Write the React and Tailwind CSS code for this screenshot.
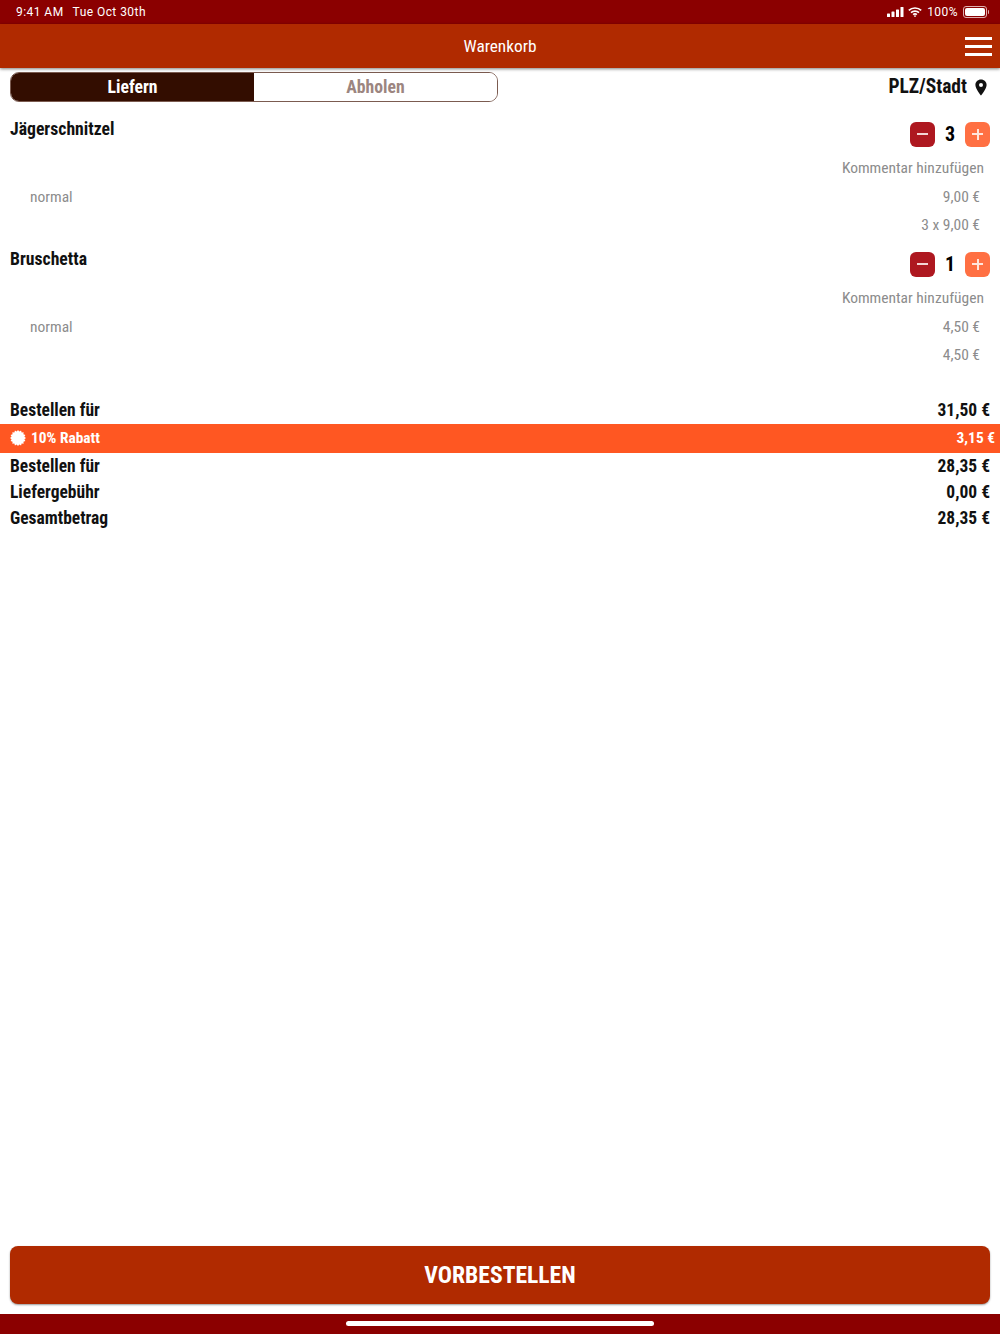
import { MapPin } from 'lucide-react';

// 10% badge, little saw-edged disc
const burstPoints = Array.from({ length: 32 }, (_, i) => {
  const r = i % 2 === 0 ? 12 : 9.8;
  const a = (i * Math.PI) / 16;
  return `${(12 + r * Math.sin(a)).toFixed(2)},${(12 - r * Math.cos(a)).toFixed(2)}`;
}).join(' ');

function Stepper({ count }) {
  return (
    <div className="flex items-center">
      <button className="w-[25px] h-[25px] rounded-[6px] bg-[#ae1820] flex items-center justify-center">
        <span className="block w-[11px] h-[2px] bg-[#f3d5d5]" />
      </button>
      <span className="w-[30px] text-center text-[20px] font-bold text-black [font-stretch:75%]">{count}</span>
      <button className="relative w-[25px] h-[25px] rounded-[6px] bg-[#ff7043] flex items-center justify-center">
        <span className="block w-[11px] h-[2px] bg-[#ffe5dc]" />
        <span className="absolute block w-[2px] h-[11px] bg-[#ffe5dc]" />
      </button>
    </div>
  );
}

function CartItem({ name, count, price, total }) {
  return (
    <div className="px-[10px]">
      <div className="flex items-start justify-between h-[38px]">
        <span className="pt-[1px] text-[17.7px] leading-[24px] font-bold text-[#111] [font-stretch:75%]">{name}</span>
        <div className="pt-[3px]"><Stepper count={count} /></div>
      </div>
      <div className="flex justify-end h-[29px] items-center pr-[6px] text-[15.5px] text-[#8c8c8c] [font-stretch:75%]">Kommentar hinzufügen</div>
      <div className="flex justify-between h-[29px] items-center pl-[20px] pr-[10px] text-[15.5px] text-[#8c8c8c] [font-stretch:75%]">
        <span>normal</span>
        <span>{price}</span>
      </div>
      <div className="flex justify-end h-[28px] items-center pr-[10px] text-[15.5px] text-[#8c8c8c] [font-stretch:75%]">{total}</div>
    </div>
  );
}

function TotalRow({ label, value, h }) {
  return (
    <div className={`flex justify-between items-center px-[10px] text-[17.5px] font-bold text-[#111] [font-stretch:75%] ${h}`}>
      <span>{label}</span>
      <span>{value}</span>
    </div>
  );
}

export default function App() {
  return (
    <div className="w-[1000px] h-[1334px] flex flex-col bg-white overflow-hidden [font-family:Roboto,sans-serif]">
      {/* status bar */}
      <div className="h-[24px] bg-[#8b0000] flex items-center justify-between pl-[16px] pr-[13px] text-white text-[12px] tracking-[0.45px]">
        <div className="flex gap-[9px]"><span>9:41 AM</span><span>Tue Oct 30th</span></div>
        <div className="flex items-center gap-[4px]">
          <svg width="17" height="10" viewBox="0 0 17 10" fill="white">
            <rect x="0" y="6.5" width="3" height="3.5" rx="0.6" />
            <rect x="4.5" y="4.5" width="3" height="5.5" rx="0.6" />
            <rect x="9" y="2.5" width="3" height="7.5" rx="0.6" />
            <rect x="13.5" y="0" width="3" height="10" rx="0.6" />
          </svg>
          <svg width="14" height="10" viewBox="0 0 14 10" fill="none" stroke="white" strokeWidth="1.7">
            <path d="M0.8 3.4C4.2 0.2 9.8 0.2 13.2 3.4" />
            <path d="M3 5.6C5.2 3.6 8.8 3.6 11 5.6" />
            <path d="M5.1 7.7C6.2 6.8 7.8 6.8 8.9 7.7" />
            <circle cx="7" cy="9.1" r="0.5" fill="white" strokeWidth="0.8" />
          </svg>
          <span className="ml-[1px]">100%</span>
          <div className="relative ml-[1px] w-[24px] h-[12px] rounded-[3px] border border-[#e0b0b0] p-[1px]">
            <div className="w-full h-full rounded-[2px] bg-white" />
            <div className="absolute right-[-3px] top-[3px] w-[1.5px] h-[4px] rounded-r bg-[#e0b0b0]" />
          </div>
        </div>
      </div>

      {/* header */}
      <div className="relative h-[44px] bg-[#b02a00] flex items-center justify-center shadow-[0_1px_3px_rgba(0,0,0,0.5)] z-10">
        <span className="pt-[1px] text-white text-[17.3px] [font-stretch:75%]">Warenkorb</span>
        <div className="absolute right-[8px] top-[13px] w-[27px] flex flex-col gap-[5px]">
          <span className="block h-[3px] bg-white" />
          <span className="block h-[3px] bg-white" />
          <span className="block h-[3px] bg-white" />
        </div>
      </div>

      {/* delivery tabs */}
      <div className="flex items-center justify-between pl-[10px] pr-[13px] mt-[4px] h-[30px]">
        <div className="flex w-[488px] h-[30px] rounded-[9px] border-[1.5px] border-[#7b5b50] overflow-hidden">
          <div className="w-[243px] bg-[#330d00] text-white flex items-center justify-center text-[17.7px] font-bold [font-stretch:75%]">Liefern</div>
          <div className="flex-1 bg-white text-[#9c8580] flex items-center justify-center text-[17.7px] font-bold [font-stretch:75%]">Abholen</div>
        </div>
        <div className="flex items-center gap-[8px]">
          <span className="text-[19.5px] font-bold text-[#111] [font-stretch:75%]">PLZ/Stadt</span>
          <svg width="12" height="17" viewBox="0 0 12 17" fill="#111">
            <path fillRule="evenodd" d="M6 0.5C2.8 0.5 0.4 2.9 0.4 6C0.4 10 6 16.5 6 16.5C6 16.5 11.6 10 11.6 6C11.6 2.9 9.2 0.5 6 0.5ZM6 4A2 2 0 1 1 6 8A2 2 0 1 1 6 4Z" />
          </svg>
        </div>
      </div>

      {/* items */}
      <div className="mt-[14px] flex flex-col gap-[6px]">
        <CartItem name="Jägerschnitzel" count={3} price="9,00 €" total="3 x 9,00 €" />
        <CartItem name="Bruschetta" count={1} price="4,50 €" total="4,50 €" />
      </div>

      {/* totals */}
      <div className="mt-[26px]">
        <TotalRow label="Bestellen für" value="31,50 €" h="h-[28px]" />
        <div className="h-[29px] bg-[#ff5722] flex items-center justify-between pl-[10px] pr-[5px] text-white text-[15.4px] font-bold [font-stretch:75%]">
          <span className="flex items-center gap-[5px]">
            <svg width="16" height="16" viewBox="0 0 24 24" fill="white"><polygon points={burstPoints} /></svg>
            10% Rabatt
          </span>
          <span>3,15 €</span>
        </div>
        <TotalRow label="Bestellen für" value="28,35 €" h="h-[26px]" />
        <TotalRow label="Liefergebühr" value="0,00 €" h="h-[26px]" />
        <TotalRow label="Gesamtbetrag" value="28,35 €" h="h-[26px]" />
      </div>

      <div className="flex-1" />

      {/* order button */}
      <div className="px-[10px] pb-[10px]">
        <button className="w-full h-[58px] pt-[1px] rounded-[8px] bg-[#b02a00] text-white text-[23.6px] font-bold [font-stretch:75%] shadow-[0_1px_2px_rgba(0,0,0,0.4)]">
          VORBESTELLEN
        </button>
      </div>

      {/* home indicator */}
      <div className="h-[20px] pb-[2px] bg-[#8b0000] flex items-center justify-center">
        <div className="w-[308px] h-[5px] rounded-full bg-white" />
      </div>
    </div>
  );
}
